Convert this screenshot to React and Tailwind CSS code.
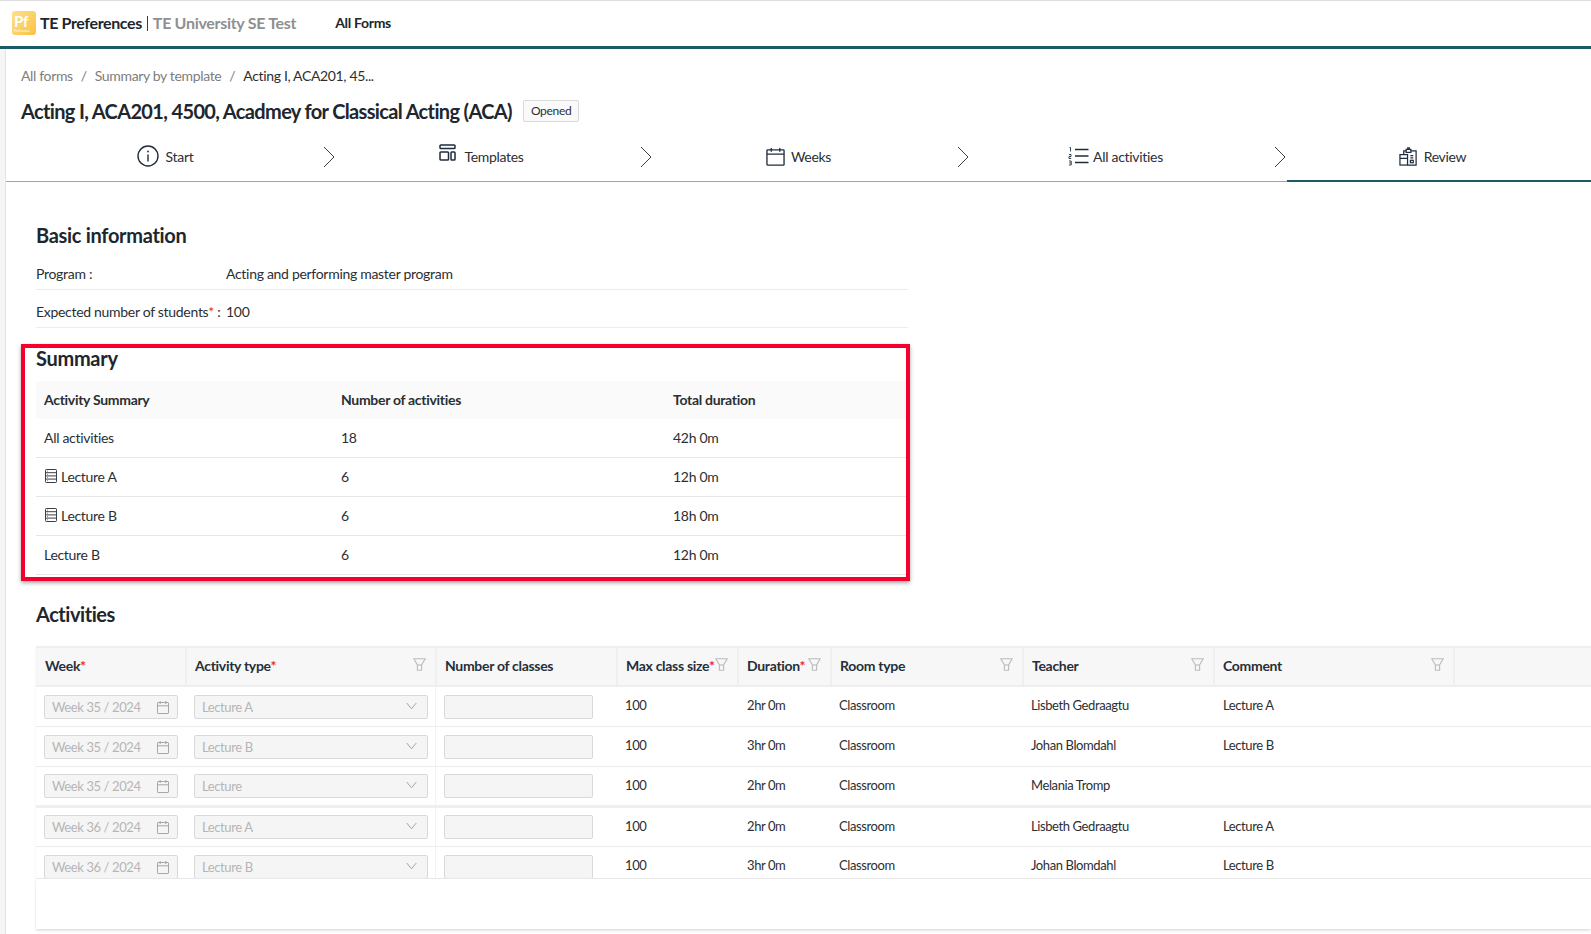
import React from "react";

const font = { fontFamily: '"Lato", "Noto Sans", sans-serif' };

function InfoIcon() {
  return (
    <svg width="24" height="24" viewBox="0 0 24 24" fill="none" stroke="#1f2d3d" strokeWidth="1.4" strokeLinecap="round">
      <circle cx="12" cy="12" r="10" />
      <path d="M12 11v6" />
      <path d="M12 7.4v.2" strokeWidth="1.8" />
    </svg>
  );
}
function TemplatesIcon() {
  return (
    <svg width="17" height="17" viewBox="0 0 17 17" fill="none" stroke="#1f2d3d" strokeWidth="1.5" className="-mt-[7px]">
      <rect x="1" y="1" width="15" height="3.6" rx="0.8" />
      <rect x="1" y="8" width="8.5" height="8" rx="0.8" />
      <rect x="12" y="8" width="4" height="8" rx="0.8" />
    </svg>
  );
}
function CalendarIcon() {
  return (
    <svg width="19" height="19" viewBox="0 0 20 20" fill="none" stroke="#1f2d3d" strokeWidth="1.4">
      <rect x="1" y="3" width="18" height="16" rx="0.6" />
      <path d="M1 7.5h18M5.5 1v4M14.5 1v4" />
    </svg>
  );
}
function ListIcon() {
  return (
    <svg width="21" height="20" viewBox="0 0 21 20" fill="none" stroke="#1f2d3d" strokeWidth="1.6">
      <path d="M1.5 1.5h1v4M1 8.5h2v2H1v2h2.2M1 15h2.2v4H1M1.2 17h2" strokeWidth="0.9" />
      <path d="M7 3.5h13.5M7 10h13.5M7 16.5h13.5" />
    </svg>
  );
}
function ReviewIcon() {
  return (
    <svg width="19" height="19" viewBox="0 0 20 20" fill="none" stroke="#1f2d3d" strokeWidth="1.3">
      <path d="M5 8V4h2.5M12.5 4H18v15h-9" />
      <rect x="7.5" y="2.5" width="5" height="3.2" />
      <path d="M9.2 2.5V1h1.6v1.5" />
      <rect x="1" y="8" width="8" height="11" />
      <path d="M1 12h8M12 9h3M12 11.5h3" />
      <rect x="12" y="14" width="3" height="2.5" />
    </svg>
  );
}
function RowsIcon() {
  return (
    <svg width="12" height="14" viewBox="0 0 12 14" fill="none" stroke="#3a3f45" strokeWidth="1" className="ml-[1px]">
      <rect x="0.5" y="0.5" width="11" height="13" rx="0.8" />
      <path d="M0.5 3.7h11M0.5 6.9h11M0.5 10.1h11" />
      <path d="M2.3 2.1h.6M2.3 5.3h.6M2.3 8.5h.6M2.3 11.8h.6" />
    </svg>
  );
}
function FilterIcon() {
  return (
    <svg width="13" height="13" viewBox="0 0 13 13" fill="none" stroke="#bcbcbc" strokeWidth="1.1" className="shrink-0 -mt-[2px]">
      <path d="M0.8 0.8h11.4L8.6 7v5.2H4.4V7z" />
      <path d="M4.4 7h4.2" />
    </svg>
  );
}
function SmallCalendar() {
  return (
    <svg width="12" height="13" viewBox="0 0 12 13" fill="none" stroke="#a6a6a6" strokeWidth="1" className="shrink-0">
      <rect x="0.5" y="1.5" width="11" height="11" rx="0.6" />
      <path d="M0.5 4.8h11M3.2 0v3M8.8 0v3" />
    </svg>
  );
}
function Down() {
  return (
    <svg width="11" height="8" viewBox="0 0 11 8" fill="none" stroke="#a6a6a6" strokeWidth="1" className="shrink-0 -mt-1">
      <path d="M0.7 1l4.8 5.8L10.3 1" />
    </svg>
  );
}
function Sep() {
  return (
    <svg width="13" height="22" viewBox="0 0 13 22" fill="none" stroke="#3a3f45" strokeWidth="1" className="absolute left-0 top-[15px]">
      <path d="M1 1l10 10L1 21" />
    </svg>
  );
}

const steps = [
  { label: "Start", icon: <InfoIcon />, gap: "gap-[6px]" },
  { label: "Templates", icon: <TemplatesIcon />, gap: "gap-[8px]" },
  { label: "Weeks", icon: <CalendarIcon />, gap: "gap-[6px]" },
  { label: "All activities", icon: <ListIcon />, gap: "gap-[4px]" },
  { label: "Review", icon: <ReviewIcon />, gap: "gap-[6px]" },
];

const summary = [
  { name: "All activities", n: "18", d: "42h 0m" },
  { name: "Lecture A", n: "6", d: "12h 0m", icon: true },
  { name: "Lecture B", n: "6", d: "18h 0m", icon: true },
  { name: "Lecture B", n: "6", d: "12h 0m" },
];

const activities = [
  { week: "Week 35 / 2024", type: "Lecture A", dur: "2hr 0m", teacher: "Lisbeth Gedraagtu", comment: "Lecture A", h: "h-[40px]", pad: "pt-[8px]" },
  { week: "Week 35 / 2024", type: "Lecture B", dur: "3hr 0m", teacher: "Johan Blomdahl", comment: "Lecture B", h: "h-[40px]", pad: "pt-[8px]" },
  { week: "Week 35 / 2024", type: "Lecture", dur: "2hr 0m", teacher: "Melania Tromp", comment: "", h: "h-[41px]", pad: "pt-[7px]", thick: true },
  { week: "Week 36 / 2024", type: "Lecture A", dur: "2hr 0m", teacher: "Lisbeth Gedraagtu", comment: "Lecture A", h: "h-[39px]", pad: "pt-[7px]" },
  { week: "Week 36 / 2024", type: "Lecture B", dur: "3hr 0m", teacher: "Johan Blomdahl", comment: "Lecture B", h: "h-[40px]", pad: "pt-[8px]" },
];

const colGrid = "grid grid-cols-[150px_250px_181px_121px_93px_192px_191px_240px_1fr]";

function Head({ label, req, filter }) {
  return (
    <div className="flex items-center justify-between pl-[9px] pr-[9px] pb-[2px] -mr-[1px] border-r-2 border-[#efefef]">
      <span className="font-bold text-[14px] text-[#262f3a] whitespace-nowrap">
        {label}
        {req && <span className="text-[#f5222d]">*</span>}
      </span>
      {filter && <FilterIcon />}
    </div>
  );
}

export default function App() {
  return (
    <div style={font} className="w-[1591px] h-[934px] overflow-hidden bg-white text-[#2b2f33] text-[14px] tracking-[-0.3px] flex flex-col">
      <header className="h-[49px] shrink-0 border-t border-[#dedede] border-b-[3px] border-b-[#175c66] flex items-center pl-[12px] pb-[1px]">
        <div className="w-[24px] h-[24px] rounded-[3px] bg-gradient-to-br from-[#fde08a] to-[#fbc23f] text-white flex flex-col pl-[2px] pt-[3px] overflow-hidden">
          <span className="font-bold text-[15px] leading-[14px]">Pf</span>
          <span className="text-[3px] leading-[4px] mt-[1px] tracking-normal whitespace-nowrap">Preferences</span>
        </div>
        <span className="ml-[4px] font-bold text-[16px] tracking-[-0.38px] text-[#20262d]">TE Preferences</span>
        <span className="mx-[5px] w-px h-[15px] bg-[#3a3f45]" />
        <span className="font-bold text-[16px] text-[#8f8f8f]">TE University SE Test</span>
        <span className="ml-[39px] font-bold text-[14px] text-[#20262d] -mt-[1px]">All Forms</span>
      </header>

      <div className="flex-1 flex min-h-0">
        <div className="w-[6px] shrink-0 bg-[#f5f5f5] border-r border-[#e4e4e4]" />
        <main className="flex-1 min-w-0 flex flex-col">
          <nav className="pl-[15px] pt-[18px] flex gap-[8px] text-[14px] tracking-[-0.35px] text-[#7d7d7d] h-[38px] items-start leading-[18px]">
            <span>All forms</span><span>/</span><span>Summary by template</span><span>/</span>
            <span className="text-[#2b2f33]">Acting I, ACA201, 45...</span>
          </nav>
          <div className="pl-[15px] flex items-center h-[23px] mt-[12px]">
            <h1 className="font-bold text-[20px] tracking-[-0.65px] text-[#20262d] whitespace-nowrap">Acting I, ACA201, 4500, Acadmey for Classical Acting (ACA)</h1>
            <span className="ml-[11px] h-[22px] px-[7px] flex items-center text-[12px] border border-[#d9d9d9] bg-[#fafafa] rounded-[2px]">Opened</span>
          </div>
          <div className="mt-[9px] h-[51px] flex border-b border-[#a3a3a3] shrink-0">
            {steps.map((s, i) => (
              <div key={s.label} className="relative flex-1 flex items-center justify-center">
                {i > 0 && <Sep />}
                <div className={`flex items-center ${s.gap}`}>
                  {s.icon}
                  <span className="text-[14px] text-[#2b2f33]">{s.label}</span>
                </div>
                {i === 4 && <div className="absolute left-[13px] right-0 -bottom-px h-[2px] bg-[#175c66]" />}
              </div>
            ))}
          </div>

          <section className="pl-[30px] w-[902px] shrink-0">
            <h2 className="mt-[40px] font-bold text-[20px] leading-[26px] tracking-[-0.3px] text-[#20262d]">Basic information</h2>
            <div className="mt-[4px] flex items-center h-[38px] pt-[5px] border-b border-[#ececec]">
              <span className="w-[190px] whitespace-nowrap">Program :</span>
              <span>Acting and performing master program</span>
            </div>
            <div className="flex items-center h-[38px] pt-[5px] border-b border-[#ececec]">
              <span className="w-[190px] whitespace-nowrap">Expected number of students<span className="text-[#f5222d]">*</span> :</span>
              <span>100</span>
            </div>
          </section>

          <section className="ml-[15px] mt-[16px] w-[889px] h-[237px] border-4 border-[#f5002e] shadow-[0_2px_4px_rgba(0,0,0,0.35)] pl-[11px] shrink-0">
            <h2 className="font-bold text-[20px] leading-[20px] tracking-[-0.3px] text-[#20262d]">Summary</h2>
            <div className="mt-[13px] grid grid-cols-[297px_332px_1fr] items-center h-[38px] pb-[2px] bg-[#fafafa] font-bold text-[#2b2f33] pl-[8px]">
              <span>Activity Summary</span><span>Number of activities</span><span>Total duration</span>
            </div>
            {summary.map((r, i) => (
              <div key={i} className="grid grid-cols-[297px_332px_1fr] items-center h-[39px] pb-[2px] border-b border-[#e6e6e6] pl-[8px]">
                <span className="flex items-center gap-[4px]">{r.icon && <RowsIcon />}{r.name}</span>
                <span>{r.n}</span>
                <span>{r.d}</span>
              </div>
            ))}
          </section>

          <h2 className="ml-[30px] mt-[20px] font-bold text-[20px] leading-[26px] tracking-[-0.45px] text-[#20262d]">Activities</h2>

          <div className="ml-[30px] mt-[19px] shadow-[0_1px_2px_rgba(0,0,0,0.08)]">
            <div className={`${colGrid} h-[41px] border-t-2 border-b-2 border-[#efefef] bg-[#f7f7f7]`}>
              <Head label="Week" req />
              <Head label="Activity type" req filter />
              <Head label="Number of classes" />
              <Head label="Max class size" req filter />
              <Head label="Duration" req filter />
              <Head label="Room type" filter />
              <Head label="Teacher" filter />
              <Head label="Comment" filter />
              <div />
            </div>
            <div className="h-[192px] overflow-hidden border-b border-[#e8e8e8]">
              {activities.map((a, i) => (
                <div key={i} className={`${colGrid} items-stretch ${a.h} ${a.thick ? "border-b-[3px] border-[#efefef]" : "border-b border-[#ececec]"} text-[13px] tracking-[-0.4px] text-[#2b2f33]`}>
                  <div className={`px-[8px] ${a.pad}`}>
                    <div className="h-[24px] flex items-center justify-between pl-[7px] pr-[8px] pt-[1px] bg-[#f5f5f5] border border-[#d9d9d9] rounded-[2px] text-[#b5b5b5]">
                      <span>{a.week}</span><SmallCalendar />
                    </div>
                  </div>
                  <div className={`pl-[8px] pr-[7px] border-r border-[#f3f3f3] ${a.pad}`}>
                    <div className="h-[24px] flex items-center justify-between pl-[7px] pr-[10px] pt-[1px] bg-[#f5f5f5] border border-[#d9d9d9] rounded-[2px] text-[#b5b5b5]">
                      <span>{a.type}</span><Down />
                    </div>
                  </div>
                  <div className={`pl-[8px] pr-[24px] ${a.pad}`}>
                    <div className="h-[24px] bg-[#f5f5f5] border border-[#d9d9d9] rounded-[2px]" />
                  </div>
                  <div className="pl-[8px] pt-[9px]">100</div>
                  <div className="pl-[9px] pt-[9px]">{a.dur}</div>
                  <div className="pl-[8px] pt-[9px]">Classroom</div>
                  <div className="pl-[8px] pt-[9px]">{a.teacher}</div>
                  <div className="pl-[9px] pt-[9px]">{a.comment}</div>
                  <div />
                </div>
              ))}
            </div>
            <div className="h-[50px] bg-white shadow-[0_2px_3px_rgba(0,0,0,0.08)]" />
          </div>
        </main>
      </div>
    </div>
  );
}
